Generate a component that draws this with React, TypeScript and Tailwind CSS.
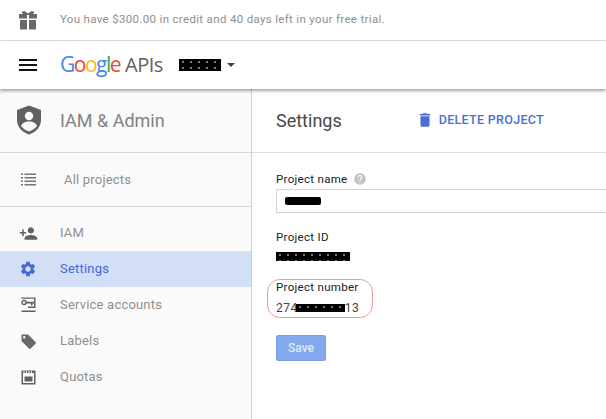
import React from "react";
import { MdDelete, MdHelp, MdMenu, MdPersonAdd, MdSettings } from "react-icons/md";

const GiftIcon = () => (
  <svg width="18" height="19" viewBox="0 0 18 19" fill="#686868">
    <path d="M2.5 1 L5.5 0 L9 2.5 L12.5 0 L15.5 1 L14 3 H18 V7.5 H10 V4 H8 V7.5 H0 V3 H4 Z" />
    <path d="M1 9 H8 V18.5 H1 Z M10 9 H17 V18.5 H10 Z" />
  </svg>
);

const ShieldIcon = () => (
  <svg width="26" height="30" viewBox="0 0 26 30">
    <path d="M13 0.5 L25 5 V15 C25 22 20 27 13 29.5 C6 27 1 22 1 15 V5 Z" fill="#616161" />
    <circle cx="13" cy="11" r="4.2" fill="#fafafa" />
    <path d="M5 21 C6.5 17.5 9.5 16.5 13 16.5 C16.5 16.5 19.5 17.5 21 21 C19 23.5 16.5 25.5 13 26.5 C9.5 25.5 7 23.5 5 21 Z" fill="#fafafa" />
  </svg>
);

const ListIcon = () => (
  <svg width="15" height="14" viewBox="0 0 15 14" fill="#757575">
    <path d="M0 0.5 H2 V2 H0 Z M0 4 H2 V5.5 H0 Z M0 7.5 H2 V9 H0 Z M0 11 H2 V12.5 H0 Z" />
    <path d="M3.5 0.5 H15 V2 H3.5 Z M3.5 4 H15 V5.5 H3.5 Z M3.5 7.5 H15 V9 H3.5 Z M3.5 11 H15 V12.5 H3.5 Z" />
  </svg>
);

const KeyIcon = () => (
  <svg width="15" height="16" viewBox="0 0 15 16" fill="#616161">
    <path d="M0.5 0.5 H14.5 V1.8 H0.5 Z M0.5 13.5 H14.5 V15 H0.5 Z" />
    <circle cx="3" cy="5.5" r="2" fill="none" stroke="#616161" strokeWidth="1.4" />
    <path d="M5 4.8 H13 V1.8 H14.5 V11 H7 V9.6 H13 V6.4 H11.5 V8.4 H10 V6.4 H5 Z" />
  </svg>
);

const TagIcon = () => (
  <svg width="15" height="15" viewBox="0 0 15 15" fill="#686868">
    <path fillRule="evenodd" d="M1 0.5 H7 L14.5 8 C15 8.6 15 9.2 14.5 9.7 L9.7 14.5 C9.2 15 8.6 15 8 14.5 L0.5 7 V1 C0.5 0.7 0.7 0.5 1 0.5 Z M3.2 2 A1.2 1.2 0 1 0 3.2 4.4 A1.2 1.2 0 1 0 3.2 2 Z" />
  </svg>
);

const QuotaIcon = () => (
  <svg width="15" height="15" viewBox="0 0 15 15" fill="#616161">
    <path d="M0.5 0.5 H14.5 V14.5 H0.5 Z M2 3 V13 H13 V3 Z" fillRule="evenodd" />
    <path d="M3.5 6.5 H11.5 V11.5 H3.5 Z" />
    <path d="M3 1 V3 M5.5 1 V3 M8 1 V3 M10.5 1 V3" stroke="#fafafa" strokeWidth="0.9" />
  </svg>
);

// censored bits of the screenshot
const Blot = ({ className }: { className: string }) => <div className={`bg-black ${className}`} />;
const SpeckledBlot = ({ className }: { className: string }) => (
  <div className={`bg-black bg-[radial-gradient(circle,#ffffff_0.5px,transparent_0.9px)] bg-[length:8px_6px] ${className}`} />
);

const NavRow = ({ icon, label, active }: { icon: React.ReactNode; label: string; active?: boolean }) => (
  <div className={`flex h-9 items-center ${active ? "bg-[#d2dff6] text-[#4369d5]" : "text-[#8f8f8f]"}`}>
    <div className="flex w-[60px] shrink-0 justify-center pr-[4px]">{icon}</div>
    <span className="text-[13px] tracking-[0.2px]">{label}</span>
  </div>
);

const FieldLabel = ({ children }: { children: React.ReactNode }) => (
  <div className="text-[11.5px] leading-[14px] tracking-[0.3px] text-[#212121]">{children}</div>
);

export default function App() {
  return (
    <div className="flex h-[419px] w-[606px] flex-col overflow-hidden bg-white font-['Roboto',sans-serif]">
      <div className="flex h-[41px] shrink-0 items-center border-b border-[#dedede]">
        <div className="flex w-[60px] justify-center pr-[4px]">
          <GiftIcon />
        </div>
        <span className="text-[11.5px] tracking-[0.33px] text-[#8f8f8f]">You have $300.00 in credit and 40 days left in your free trial.</span>
      </div>

      <div className="relative z-10 flex h-[48px] shrink-0 items-center bg-white shadow-[0_2px_3px_rgba(0,0,0,0.35)]">
        <div className="flex w-[60px] justify-center pr-[4px]">
          <MdMenu size={24} color="#111" />
        </div>
        <div className="flex items-center font-['Open_Sans',sans-serif] text-[21px] tracking-[-1.5px]">
          <span className="text-[#4285f4]">G</span>
          <span className="text-[#ea4335]">o</span>
          <span className="text-[#fbbc05]">o</span>
          <span className="text-[#4285f4]">g</span>
          <span className="text-[#34a853]">l</span>
          <span className="text-[#ea4335]">e</span>
        </div>
        <span className="ml-[5px] font-['Open_Sans',sans-serif] text-[20px] tracking-[-0.5px] text-[#616161]">APIs</span>
        <SpeckledBlot className="ml-[16px] h-[12px] w-[42px]" />
        <div className="ml-[6px] h-0 w-0 border-x-[4px] border-t-[4px] border-x-transparent border-t-[#424242]" />
      </div>

      <div className="flex min-h-0 flex-1">
        <div className="w-[252px] shrink-0 border-r border-[#d0d0d0] bg-[#fafafa]">
          <div className="flex h-[64px] items-center border-b border-[#d8d8d8] pb-[1px]">
            <div className="flex w-[58px] justify-center">
              <ShieldIcon />
            </div>
            <span className="ml-[2px] text-[18px] text-[#828282]">IAM &amp; Admin</span>
          </div>
          <div className="flex h-[54px] items-center border-b border-[#d8d8d8] text-[#8f8f8f]">
            <div className="flex w-[60px] justify-center pr-[4px]">
              <ListIcon />
            </div>
            <span className="ml-[4px] text-[13px] tracking-[0.2px]">All projects</span>
          </div>
          <div className="pt-2">
            <NavRow icon={<MdPersonAdd size={19} color="#616161" />} label="IAM" />
            <NavRow active icon={<MdSettings size={18} color="#4369d5" />} label="Settings" />
            <NavRow icon={<KeyIcon />} label="Service accounts" />
            <NavRow icon={<TagIcon />} label="Labels" />
            <NavRow icon={<QuotaIcon />} label="Quotas" />
          </div>
        </div>

        <div className="relative min-w-0 flex-1">
          <div className="flex h-[64px] items-center border-b border-[#dcdcdc] pb-[1px] pl-[24px]">
            <span className="text-[18px] text-[#484848]">Settings</span>
            <div className="ml-[74px] flex items-center gap-[5px] text-[#4a6fd3]">
              <MdDelete size={18} />
              <span className="text-[12.5px] font-medium tracking-[0.3px]">DELETE PROJECT</span>
            </div>
          </div>

          <div className="pl-[24px] pt-[19px]">
            <div className="flex items-center gap-[6px]">
              <FieldLabel>Project name</FieldLabel>
              <MdHelp size={14} color="#c4c4c4" />
            </div>
            <div className="mt-[3px] flex h-[24px] w-[340px] items-center border border-[#d4d4d4] pl-[8px]">
              <Blot className="h-[8px] w-[36px] rounded-[2px] blur-[0.5px]" />
            </div>

            <div className="mt-[17px]">
              <FieldLabel>Project ID</FieldLabel>
            </div>
            <SpeckledBlot className="mt-[8px] h-[9px] w-[74px]" />

            <div className="relative mt-[19px]">
              <div className="absolute left-[-9px] top-[-1px] h-[39px] w-[106px] rounded-[13px] border-[1.5px] border-[#ec9c9c]" />
              <FieldLabel>Project number</FieldLabel>
              <div className="mt-[7px] flex h-[14px] items-center text-[12px] tracking-[0.5px] text-[#424242]">
                <span>274</span>
                <SpeckledBlot className="ml-[-2px] h-[8px] w-[49px]" />
                <span>13</span>
              </div>
            </div>

            <div className="mt-[20px] flex h-[26px] w-[50px] items-center justify-center rounded-[2px] border border-[#7da0e4] bg-[#85a9ed] text-[12px] font-medium text-[#dfe9fb]">
              Save
            </div>
          </div>
        </div>
      </div>
    </div>
  );
}
